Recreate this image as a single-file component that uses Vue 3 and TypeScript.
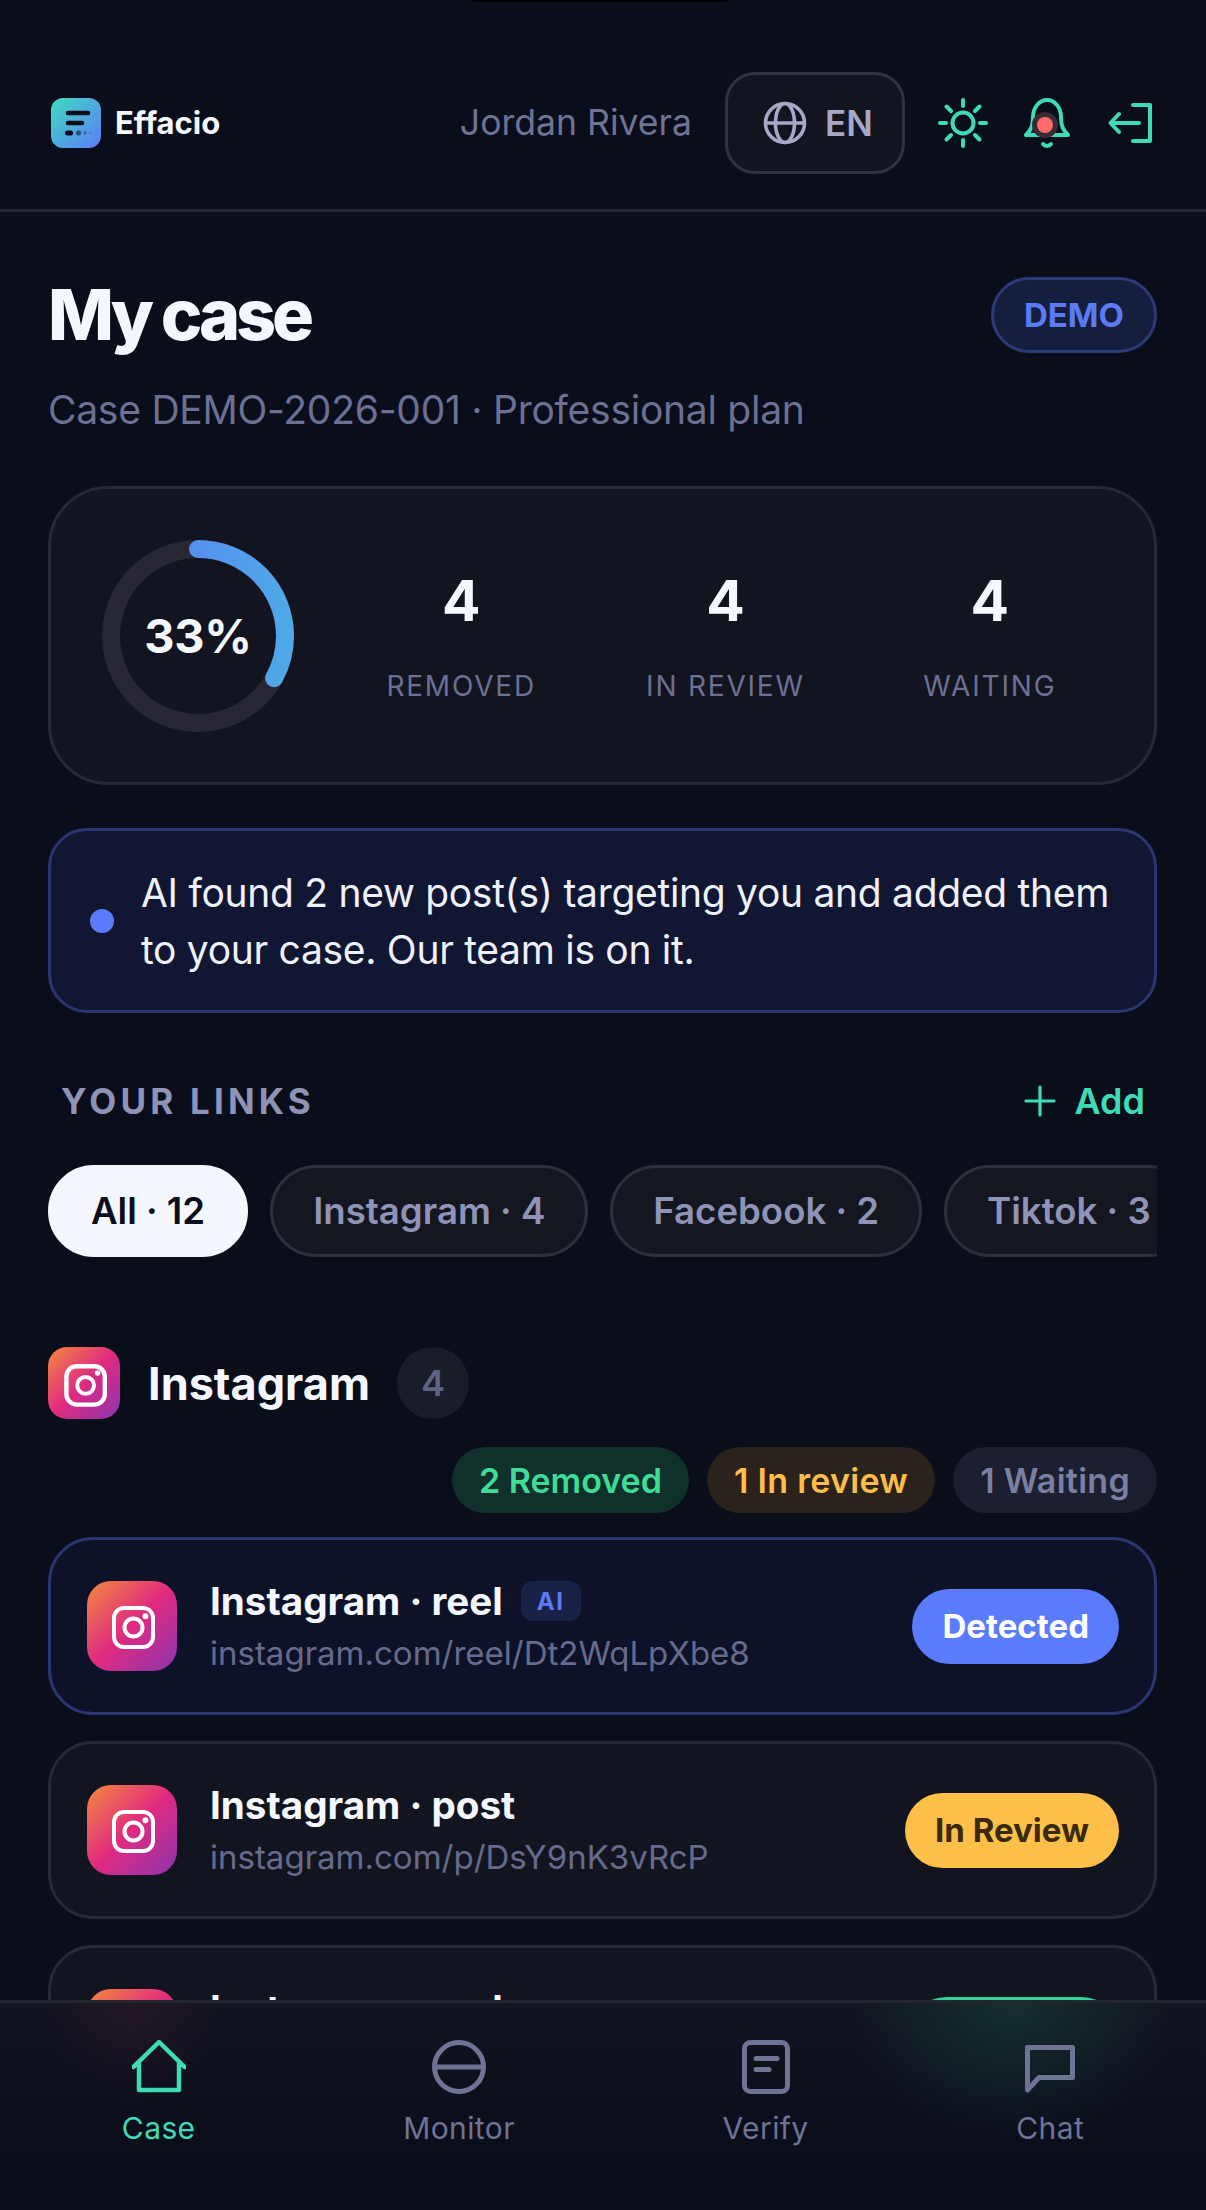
<script setup lang="ts">
// Mobile case dashboard, drawn at 3x of a 402px wide phone viewport.
interface Stat { value: number; label: string }
interface Link { title: string; url: string; status: string; tone: string; ai?: boolean }

const progress = 33
const radius = 87
const circumference = 2 * Math.PI * radius
const dash = `${(circumference * progress) / 100} ${circumference}`

const stats: Stat[] = [
  { value: 4, label: 'Removed' },
  { value: 4, label: 'In review' },
  { value: 4, label: 'Waiting' },
]

const chips = ['All · 12', 'Instagram · 4', 'Facebook · 2', 'Tiktok · 3']

const tallies = [
  { text: '2 Removed', tone: 'green' },
  { text: '1 In review', tone: 'amber' },
  { text: '1 Waiting', tone: 'slate' },
]

const links: Link[] = [
  { title: 'Instagram · reel', url: 'instagram.com/reel/Dt2WqLpXbe8', status: 'Detected', tone: 'blue', ai: true },
  { title: 'Instagram · post', url: 'instagram.com/p/DsY9nK3vRcP', status: 'In Review', tone: 'amber' },
  { title: 'Instagram · reel', url: 'instagram.com/reel/Dr4TzHmQw1A', status: 'Removed', tone: 'green' },
]
</script>

<template>
  <div class="screen">
    <div class="notch"></div>

    <header class="topbar">
      <div class="brand">
        <svg class="logo" viewBox="0 0 50 50">
          <defs>
            <linearGradient id="logo-grad" x1="0" y1="0" x2="1" y2="1">
              <stop offset="0%" stop-color="#3fdcc0" />
              <stop offset="100%" stop-color="#5b7cfa" />
            </linearGradient>
          </defs>
          <rect width="50" height="50" rx="12" fill="url(#logo-grad)" />
          <path d="M17 15H37" stroke="#0a0d1a" stroke-width="4.5" stroke-linecap="round" />
          <path d="M17 25H31" stroke="#0a0d1a" stroke-width="4.5" stroke-linecap="round" />
          <rect x="14" y="32.500" width="8" height="5" rx="2.500" fill="#0a0d1a" />
          <circle cx="27.500" cy="35" r="2.500" fill="#0a0d1a" opacity="0.55" />
          <circle cx="34" cy="35" r="1.800" fill="#0a0d1a" opacity="0.3" />
          <circle cx="39" cy="35" r="1.200" fill="#0a0d1a" opacity="0.15" />
        </svg>
        <span class="brand-name">Effacio</span>
      </div>
      <div class="top-right">
        <span class="user">Jordan Rivera</span>
        <button class="lang">
          <svg class="globe" viewBox="0 0 44 44" fill="none" stroke="#a5a8c6" stroke-width="3.600">
            <circle cx="22" cy="22" r="19.500" />
            <path d="M2.500 22H41.500" />
            <ellipse cx="22" cy="22" rx="9.500" ry="19.500" />
          </svg>
          <span>EN</span>
        </button>
        <svg class="ico sun" viewBox="0 0 50 50" fill="none" stroke="#3ddbb8" stroke-width="4" stroke-linecap="round">
          <circle cx="25" cy="25" r="10.500" />
          <path d="M25 2V8M25 42V48M2 25H8M42 25H48M8.500 8.500L13 13M37 37L41.500 41.500M8.500 41.500L13 37M37 13L41.500 8.500" />
        </svg>
        <span class="bell">
          <svg class="ico" viewBox="0 0 46 50" fill="none" stroke="#3ddbb8" stroke-width="4" stroke-linecap="round" stroke-linejoin="round">
            <path d="M2 37H44C39 32 37 28 37 19C37 10 31 2 23 2C15 2 9 10 9 19C9 28 7 32 2 37Z" />
            <path d="M19 46C21 48.500 25 48.500 27 46" />
          </svg>
          <i class="bell-dot"></i>
        </span>
        <svg class="ico logout" viewBox="0 0 44 40" fill="none" stroke="#3ddbb8" stroke-width="4" stroke-linecap="round" stroke-linejoin="round">
          <path d="M25 2H42V38H25" />
          <path d="M31 20H3M11 11L2.500 20L11 29" />
        </svg>
      </div>
    </header>

    <main class="content">
      <div class="title-row">
        <h1>My case</h1>
        <span class="demo">DEMO</span>
      </div>
      <p class="subtitle">Case DEMO-2026-001 · Professional plan</p>

      <section class="summary">
        <div class="ring">
          <svg viewBox="0 0 192 192">
            <defs>
              <linearGradient id="ring-grad" x1="0" y1="0" x2="0" y2="1">
                <stop offset="0%" stop-color="#5b7cf7" />
                <stop offset="100%" stop-color="#4fa8e8" />
              </linearGradient>
            </defs>
            <circle cx="96" cy="96" :r="radius" fill="none" stroke="#272833" stroke-width="18" />
            <circle
              cx="96" cy="96" :r="radius" fill="none" stroke="url(#ring-grad)" stroke-width="18"
              stroke-linecap="round" :stroke-dasharray="dash" transform="rotate(-90 96 96)"
            />
          </svg>
          <span class="ring-value">{{ progress }}%</span>
        </div>
        <div class="stats">
          <div v-for="s in stats" :key="s.label" class="stat">
            <strong>{{ s.value }}</strong>
            <span>{{ s.label }}</span>
          </div>
        </div>
      </section>

      <section class="notice">
        <i class="notice-dot"></i>
        <p>AI found 2 new post(s) targeting you and added them to your case. Our team is on it.</p>
      </section>

      <div class="links-head">
        <h2>YOUR LINKS</h2>
        <button class="add">
          <svg viewBox="0 0 32 32" fill="none" stroke="#3ddbb8" stroke-width="3.200" stroke-linecap="round">
            <path d="M16 2V30M2 16H30" />
          </svg>
          <span>Add</span>
        </button>
      </div>

      <div class="chips">
        <button v-for="(c, i) in chips" :key="c" class="chip" :class="{ active: i === 0 }">{{ c }}</button>
      </div>

      <div class="group-head">
        <svg class="ig ig-sm" viewBox="0 0 90 90">
          <defs>
            <linearGradient id="ig-grad" x1="0" y1="0" x2="1" y2="1">
              <stop offset="0%" stop-color="#f58a3c" />
              <stop offset="50%" stop-color="#e02a80" />
              <stop offset="100%" stop-color="#8a35b0" />
            </linearGradient>
          </defs>
          <rect width="90" height="90" rx="24" fill="url(#ig-grad)" />
          <rect x="23" y="24" width="48" height="48" rx="13" fill="none" stroke="#fff" stroke-width="5.500" />
          <circle cx="47" cy="48" r="10.500" fill="none" stroke="#fff" stroke-width="5" />
          <circle cx="62" cy="32.500" r="3.500" fill="#fff" />
        </svg>
        <span class="group-name">Instagram</span>
        <span class="group-count">4</span>
      </div>

      <div class="tallies">
        <span v-for="t in tallies" :key="t.text" class="tally" :class="t.tone">{{ t.text }}</span>
      </div>

      <div class="cards">
        <article v-for="(l, i) in links" :key="l.url" class="card" :class="{ fresh: i === 0 }">
          <svg class="ig" viewBox="0 0 90 90">
            <rect width="90" height="90" rx="24" fill="url(#ig-grad)" />
            <rect x="27" y="27" width="39" height="39" rx="10" fill="none" stroke="#fff" stroke-width="4" />
            <circle cx="46.500" cy="46.500" r="9" fill="none" stroke="#fff" stroke-width="4" />
            <circle cx="58.400" cy="35.200" r="3" fill="#fff" />
          </svg>
          <div class="card-text">
            <div class="card-title">
              <span>{{ l.title }}</span>
              <em v-if="l.ai">AI</em>
            </div>
            <div class="card-url">{{ l.url }}</div>
          </div>
          <span class="status" :class="l.tone">{{ l.status }}</span>
        </article>
      </div>
    </main>

    <nav class="tabbar">
      <a class="tab on">
        <svg viewBox="0 0 54 54" fill="none" stroke="currentColor" stroke-width="4.500" stroke-linecap="round" stroke-linejoin="round">
          <path d="M1.500 27L27 2L52.500 27M7 23V50H47V23" />
        </svg>
        <span>Case</span>
      </a>
      <a class="tab">
        <svg viewBox="0 0 54 54" fill="none" stroke="currentColor" stroke-width="5" stroke-linecap="round">
          <circle cx="27" cy="27" r="24.500" />
          <path d="M3 27H51" />
        </svg>
        <span>Monitor</span>
      </a>
      <a class="tab">
        <svg viewBox="0 0 48 54" fill="none" stroke="currentColor" stroke-width="5" stroke-linecap="round" stroke-linejoin="round">
          <rect x="2.500" y="2.500" width="43" height="49" rx="6" />
          <path d="M14 18.500H35M14 29.500H27" />
        </svg>
        <span>Verify</span>
      </a>
      <a class="tab">
        <svg viewBox="0 0 54 54" fill="none" stroke="currentColor" stroke-width="5" stroke-linecap="round" stroke-linejoin="round">
          <path d="M4.500 7.500H49.500V37.500H16L4.500 50Z" />
        </svg>
        <span>Chat</span>
      </a>
    </nav>
  </div>
</template>

<style scoped>
.screen {
  position: relative;
  width: 1206px;
  height: 2210px;
  overflow: hidden;
  background: #0a0d1a;
  color: #f5f7ff;
  font-family: Inter, "Liberation Sans", sans-serif;
}
.notch {
  position: absolute;
  top: -40px;
  left: 450px;
  width: 300px;
  height: 42px;
  border-radius: 0 0 30px 30px;
  background: #000;
}

.topbar {
  display: flex;
  align-items: center;
  justify-content: space-between;
  padding: 72px 54px 35px 51px;
  border-bottom: 3px solid #23252f;
}
.brand {
  display: flex;
  align-items: center;
  gap: 14px;
}
.logo {
  width: 50px;
  height: 50px;
}
.brand-name {
  font-size: 31px;
  font-weight: 700;
  padding-bottom: 2px;
}
.top-right {
  display: flex;
  align-items: center;
}
.user {
  margin-right: 33px;
  padding-bottom: 2px;
  font-size: 35.600px;
  color: #6f7394;
}
.lang {
  display: flex;
  align-items: center;
  gap: 18px;
  box-sizing: border-box;
  width: 180px;
  height: 102px;
  padding: 0 0 0 35px;
  border: 3px solid #30323e;
  border-radius: 30px;
  background: #12141f;
  color: #a5a8c6;
  font-family: inherit;
  font-size: 35px;
  font-weight: 600;
}
.globe {
  width: 44px;
  height: 44px;
}
.ico {
  display: block;
}
.sun {
  width: 50px;
  height: 50px;
  margin-left: 33px;
}
.bell {
  position: relative;
  margin-left: 36px;
}
.bell .ico {
  width: 46px;
  height: 50px;
}
.bell-dot {
  position: absolute;
  left: 13px;
  top: 19px;
  width: 16px;
  height: 16px;
  border-radius: 50%;
  background: #ff6b6b;
  box-shadow: 0 0 0 5px #3a2a33;
}
.logout {
  width: 44px;
  height: 40px;
  margin-left: 38px;
}

.content {
  padding: 65px 49px 0 48px;
}
.title-row {
  display: flex;
  align-items: center;
  justify-content: space-between;
}
h1 {
  margin: 0;
  font-size: 70px;
  line-height: 76px;
  font-weight: 800;
  letter-spacing: -4.200px;
}
.demo {
  box-sizing: border-box;
  display: flex;
  align-items: center;
  justify-content: center;
  width: 166px;
  height: 76px;
  border: 3px solid #2c3b78;
  border-radius: 38px;
  background: #161e3e;
  color: #5b7bf5;
  font-size: 33px;
  font-weight: 700;
}
.subtitle {
  margin: 33px 0 0;
  font-size: 39px;
  line-height: 48px;
  letter-spacing: -0.260px;
  color: #6c7092;
}

.summary {
  display: flex;
  align-items: center;
  box-sizing: border-box;
  height: 299px;
  margin-top: 52px;
  padding: 0 32px 0 51px;
  border: 3px solid #272933;
  border-radius: 60px;
  background: #12151f;
}
.ring {
  position: relative;
  flex: none;
  width: 192px;
  height: 192px;
}
.ring svg {
  display: block;
  width: 192px;
  height: 192px;
}
.ring-value {
  position: absolute;
  inset: 0;
  display: flex;
  align-items: center;
  justify-content: center;
  font-size: 47px;
  font-weight: 700;
  letter-spacing: -0.300px;
}
.stats {
  flex: 1;
  display: grid;
  grid-template-columns: repeat(3, 1fr);
  margin-left: 35px;
}
.stat {
  display: flex;
  flex-direction: column;
  align-items: center;
  gap: 34px;
}
.stat strong {
  font-size: 57px;
  line-height: 66px;
  font-weight: 700;
}
.stat span {
  font-size: 28px;
  line-height: 36px;
  letter-spacing: 1.800px;
  text-transform: uppercase;
  color: #6c7092;
}

.notice {
  display: flex;
  align-items: center;
  gap: 27px;
  box-sizing: border-box;
  height: 185px;
  margin-top: 43px;
  padding: 0 26px 0 39px;
  border: 3px solid #2a3670;
  border-radius: 39px;
  background: #111733;
}
.notice-dot {
  flex: none;
  width: 24px;
  height: 24px;
  border-radius: 50%;
  background: #5b7cfa;
}
.notice p {
  margin: 0;
  font-size: 39px;
  line-height: 57px;
  letter-spacing: -0.300px;
  color: #eef0fa;
}

.links-head {
  display: flex;
  align-items: center;
  justify-content: space-between;
  margin-top: 66px;
  padding: 0 12px 0 13px;
  height: 44px;
}
h2 {
  margin: 0;
  font-size: 35px;
  font-weight: 700;
  letter-spacing: 4.200px;
  color: #8f93b5;
}
.add {
  display: flex;
  align-items: center;
  gap: 18px;
  padding: 0;
  border: 0;
  background: none;
  color: #3ddbb8;
  font-family: inherit;
  font-size: 36px;
  font-weight: 600;
}
.add svg {
  width: 32px;
  height: 32px;
}

.chips {
  display: flex;
  gap: 22px;
  margin-top: 42px;
  overflow: hidden;
}
.chip {
  flex: none;
  box-sizing: border-box;
  height: 92px;
  padding: 0 40px;
  border: 3px solid #2d2f3b;
  border-radius: 46px;
  background: #141620;
  color: #8f93b5;
  font-family: inherit;
  font-size: 36.600px;
  font-weight: 600;
}
.chip.active {
  border-color: #f5f7ff;
  background: #f5f7ff;
  color: #0a0d1a;
}

.group-head {
  display: flex;
  align-items: center;
  margin-top: 90px;
}
.ig {
  flex: none;
  display: block;
  width: 90px;
  height: 90px;
}
.ig-sm {
  width: 72px;
  height: 72px;
}
.group-name {
  margin-left: 28px;
  font-size: 45px;
  font-weight: 700;
}
.group-count {
  display: flex;
  align-items: center;
  justify-content: center;
  width: 72px;
  height: 72px;
  margin-left: 27px;
  border-radius: 50%;
  background: #191c29;
  color: #5f6384;
  font-size: 36px;
  font-weight: 600;
}

.tallies {
  display: flex;
  justify-content: flex-end;
  gap: 18px;
  margin-top: 28px;
}
.tally {
  display: flex;
  align-items: center;
  height: 66px;
  padding: 0 27px;
  border-radius: 33px;
  font-size: 34px;
  font-weight: 600;
  letter-spacing: 0.300px;
}
.tally.green {
  background: #10302b;
  color: #3ddc97;
  letter-spacing: 0;
}
.tally.amber {
  background: #2a231c;
  color: #ffbd4a;
}
.tally.slate {
  background: #1c1f30;
  color: #7b80a3;
}

.cards {
  display: flex;
  flex-direction: column;
  gap: 26px;
  margin-top: 24px;
}
.card {
  display: flex;
  align-items: center;
  box-sizing: border-box;
  height: 178px;
  padding: 0 35px 0 36px;
  border: 3px solid #272933;
  border-radius: 45px;
  background: #12151f;
}
.card.fresh {
  border-color: #2a3670;
  background: #0e1228;
}
.card-text {
  flex: 1;
  margin-left: 33px;
}
.card-title {
  display: flex;
  align-items: center;
  gap: 18px;
  height: 42px;
  padding-top: 2px;
  font-size: 38.600px;
  font-weight: 700;
}
.card-title em {
  display: flex;
  align-items: center;
  justify-content: center;
  width: 60px;
  height: 40px;
  border-radius: 12px;
  background: #182247;
  color: #5b7bf5;
  font-size: 24px;
  font-style: normal;
  letter-spacing: 1.500px;
}
.card-url {
  margin-top: 10px;
  font-size: 33px;
  line-height: 42px;
  color: #666b8c;
}
.status {
  display: flex;
  align-items: center;
  height: 75px;
  padding: 0 30px;
  border-radius: 38px;
  font-size: 33px;
  font-weight: 700;
}
.status.blue {
  background: #5b7cfa;
  color: #fff;
}
.status.amber {
  background: #ffc04a;
  color: #3a2a0a;
}
.status.green {
  background: #34d399;
  color: #06291f;
}

.tabbar {
  position: absolute;
  left: 0;
  right: 0;
  top: 2000px;
  bottom: 0;
  display: flex;
  justify-content: space-around;
  align-items: flex-start;
  box-sizing: border-box;
  padding: 37px 18px 0;
  border-top: 3px solid #23252f;
  background:
    radial-gradient(90px 100px at 132px 0, rgba(150, 40, 70, 0.13), transparent),
    radial-gradient(165px 140px at 1012px 0, rgba(40, 190, 130, 0.16), transparent),
    linear-gradient(180deg, #12141f, #0a0d1a 78%);
}
.tab {
  display: flex;
  flex-direction: column;
  align-items: center;
  gap: 16px;
  color: #6f7394;
  font-size: 30px;
  line-height: 36px;
  letter-spacing: 0.400px;
}
.tab svg {
  display: block;
  width: 54px;
  height: 54px;
}
.tab.on {
  color: #3ddbb8;
}
</style>

<style>
html, body {
  margin: 0;
  background: #0a0d1a;
}
</style>
